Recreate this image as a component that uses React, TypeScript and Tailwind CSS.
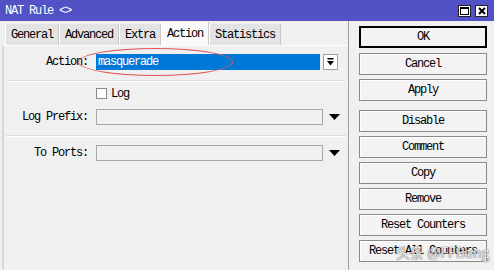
import React from "react";

const mono = { fontFamily: '"Liberation Mono", "DejaVu Sans Mono", monospace' };

function Btn({ label, def }: { label: string; def?: boolean }) {
  return (
    <div
      className={
        "h-[22px] w-[128px] flex items-center justify-center bg-[#f3f3f3] text-black " +
        (def ? "border-2 border-black" : "border border-[#8a8a8a] shadow-[inset_1px_1px_0_#ffffff]")
      }
    >
      {label}
    </div>
  );
}

function Arrow() {
  return (
    <svg width="11" height="6" viewBox="0 0 11 6" className="ml-[6px]">
      <polygon points="0,0 11,0 5.5,6" fill="#000" />
    </svg>
  );
}

export default function App() {
  return (
    <div
      className="relative w-[494px] h-[270px] overflow-hidden bg-[#f0f0f0] flex flex-col text-[12px] tracking-[-1.2px] leading-none text-black"
      style={mono}
    >
      {/* title bar */}
      <div className="h-[21px] bg-[#5252c6] flex items-center pl-[5px] pr-[6px] text-white">
        <span className="flex-1">NAT Rule &lt;&gt;</span>
        <div className="flex gap-[4px]">
          <div className="w-[13px] h-[12px] bg-white border border-[#222] flex items-center justify-center">
            <div className="w-[9px] h-[8px] border border-black border-t-2" />
          </div>
          <div className="w-[13px] h-[12px] bg-white border border-[#222] flex items-center justify-center">
            <svg width="8" height="8" viewBox="0 0 8 8">
              <path d="M1 1 L7 7 M7 1 L1 7" stroke="#000" strokeWidth="2" />
            </svg>
          </div>
        </div>
      </div>

      <div className="flex flex-1">
        {/* left side */}
        <div className="w-[348px] flex flex-col pl-[2px]">
          <div className="h-[24px] flex items-end pl-[3px]">
            {["General", "Advanced", "Extra"].map((t) => (
              <div
                key={t}
                className="h-[21px] px-[5px] flex items-center bg-[#e3e3e3] border-l border-white border-r border-r-[#c8c8c8]"
              >
                {t}
              </div>
            ))}
            <div className="h-[23px] px-[5px] flex items-center bg-[#fafafa] border-l border-white border-r border-r-[#c8c8c8]">
              Action
            </div>
            <div className="h-[21px] px-[5px] flex items-center bg-[#e3e3e3] border-l border-white border-r border-r-[#c8c8c8]">
              Statistics
            </div>
          </div>
          <div className="flex-1 border-l-2 border-l-[#d8d8d8] border-t border-t-white pl-[2px] flex flex-col">
            <div className="h-[8px]" />
            <div className="flex items-center h-[16px]">
              <div className="w-[82px] text-right">Action:</div>
              <div className="ml-[8px] w-[224px] h-[16px] bg-[#0078d7] text-white flex items-center pl-[2px]">
                masquerade
              </div>
              <div className="ml-[3px] w-[15px] h-[16px] bg-white border border-[#a0a0a0] flex items-center justify-center">
                <svg width="7" height="8" viewBox="0 0 7 8">
                  <rect x="0.5" y="0" width="6" height="1.5" fill="#000" />
                  <polygon points="0,3 7,3 3.5,7.5" fill="#000" />
                </svg>
              </div>
            </div>
            <div className="mt-[10px] h-[2px] border-t border-[#dddddd] border-b border-b-white w-[340px]" />
            <div className="mt-[6px] flex items-center h-[11px]">
              <div className="ml-[90px] w-[11px] h-[11px] bg-white border border-[#8a8a8a]" />
              <span className="ml-[4px]">Log</span>
            </div>
            <div className="mt-[10px] flex items-center h-[16px]">
              <div className="w-[82px] text-right">Log Prefix:</div>
              <div className="ml-[8px] w-[227px] h-[16px] bg-[#f0f0f0] border border-[#a8a8a8]" />
              <Arrow />
            </div>
            <div className="mt-[10px] h-[2px] border-t border-[#dddddd] border-b border-b-white w-[340px]" />
            <div className="mt-[8px] flex items-center h-[16px]">
              <div className="w-[82px] text-right">To Ports:</div>
              <div className="ml-[8px] w-[227px] h-[16px] bg-[#f0f0f0] border border-[#a8a8a8]" />
              <Arrow />
            </div>
          </div>
        </div>

        {/* right side */}
        <div className="flex-1 border-l border-[#a0a0a0] pl-[10px] pt-[5px] flex flex-col gap-[4px]">
          <div className="mb-[1px]"><Btn label="OK" def /></div>
          <Btn label="Cancel" />
          <Btn label="Apply" />
          <div className="h-[5px]" />
          <div className="-mt-[4px]"><Btn label="Disable" /></div>
          <Btn label="Comment" />
          <Btn label="Copy" />
          <Btn label="Remove" />
          <Btn label="Reset Counters" />
          <Btn label="Reset All Counters" />
        </div>
      </div>

      {/* red annotation ellipse */}
      <div className="absolute left-[78px] top-[48px] w-[155px] h-[28px] rounded-[50%] border border-[#e05555]" />

      {/* watermark */}
      <div
        className="absolute left-[396px] top-[245px] text-[14px] tracking-normal text-white/80 [text-shadow:0_0_1px_#666,0_0_1px_#666]"
        style={{ fontFamily: '"Noto Sans CJK SC", "Noto Sans", sans-serif' }}
      >
        头条 @FFBang
      </div>
    </div>
  );
}
